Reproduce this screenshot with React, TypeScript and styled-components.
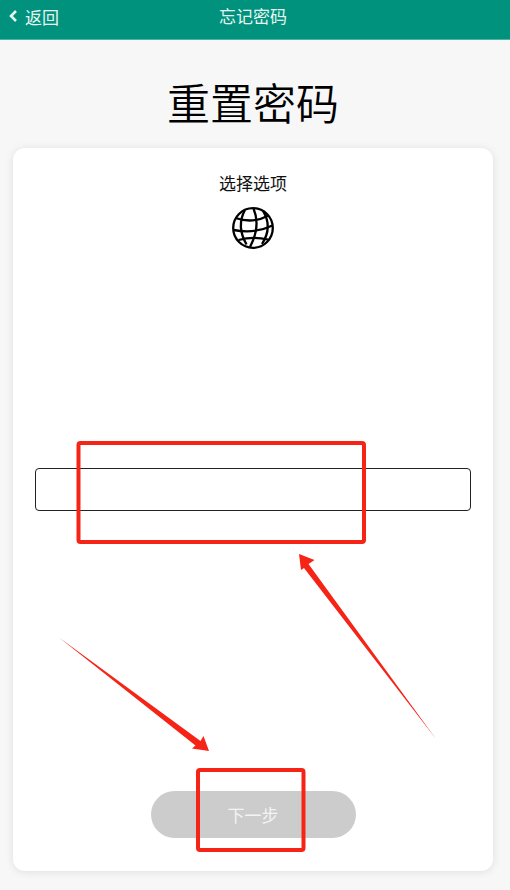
import React from 'react';
import styled, { createGlobalStyle } from 'styled-components';

const GlobalStyle = createGlobalStyle`
  html, body {
    margin: 0;
    padding: 0;
    background: #f7f7f7;
    font-family: "Noto Sans CJK SC", "Liberation Sans", sans-serif;
  }
`;

const Page = styled.div`
  position: relative;
  width: 510px;
  height: 890px;
  display: flex;
  flex-direction: column;
  overflow: hidden;
  background: #f7f7f7;
`;

const Header = styled.header`
  height: 40px;
  flex: none;
  box-sizing: border-box;
  position: relative;
  display: flex;
  align-items: center;
  justify-content: center;
  padding-right: 4px;
  background: #00927d;
  border-bottom: 1px solid #4fb3a4;
  color: #e6f5f2;
  font-size: 17px;
`;

const BackLink = styled.div`
  position: absolute;
  left: 8px;
  top: 0;
  height: 32px;
  display: flex;
  align-items: center;
  gap: 7px;
`;

const HeaderTitle = styled.div`
  margin-top: -9px;
`;

const Title = styled.h1`
  margin: 32px 4px 0 0;
  height: 76px;
  text-align: center;
  color: #000;
  font-size: 43px;
  font-weight: 350;
  line-height: 58px;
`;

const Card = styled.main`
  margin: 0 17px 19px 13px;
  flex: 1;
  display: flex;
  flex-direction: column;
  align-items: center;
  background: #fff;
  border-radius: 12px;
  box-shadow: 0 1px 8px rgba(0, 0, 0, 0.1);
`;

const Label = styled.div`
  margin-top: 23px;
  height: 24px;
  line-height: 24px;
  font-size: 17px;
  color: #111;
`;

const GlobeIcon = styled.svg`
  margin-top: 11px;
  margin-right: 1px;
  width: 44px;
  height: 44px;
`;

const Input = styled.div`
  margin-top: 218px;
  width: 436px;
  height: 43px;
  box-sizing: border-box;
  border: 1px solid #222;
  border-radius: 4px;
  background: #fff;
`;

const NextButton = styled.button`
  margin-top: auto;
  margin-bottom: 33px;
  width: 205px;
  height: 47px;
  border: 0;
  border-radius: 24px;
  background: #cccccc;
  color: #f4f4f4;
  font-family: inherit;
  font-size: 17px;
`;

const Annotations = styled.svg`
  position: absolute;
  inset: 0;
  width: 510px;
  height: 890px;
  pointer-events: none;
`;

export default function App() {
  return (
    <Page>
      <GlobalStyle />
      <Header>
        <BackLink>
          <svg width="10" height="14" viewBox="0 0 10 14">
            <path d="M8 2 3 7l5 5" fill="none" stroke="#e6f5f2" strokeWidth="2.6" />
          </svg>
          返回
        </BackLink>
        <HeaderTitle>忘记密码</HeaderTitle>
      </Header>
      <Title>重置密码</Title>
      <Card>
        <Label>选择选项</Label>
        <GlobeIcon viewBox="0 0 44 44" fill="none" stroke="#000" strokeWidth="2.3">
          <circle cx="22" cy="22" r="19.8" />
          <path d="M14 4Q5 20 15.500 38.500" />
          <path d="M22.500 2.500Q30 20 19 41" />
          <path d="M32 5Q42 21 31 38" />
          <path d="M4.500 12Q22 18 37.500 9.500" />
          <path d="M2.500 24Q24 28 41.500 19.500" />
          <path d="M7.500 34Q22 30 37 33.500" />
        </GlobeIcon>
        <Input />
        <NextButton>下一步</NextButton>
      </Card>
      <Annotations viewBox="0 0 510 890">
        <rect x="78.500" y="443" width="285.500" height="99" rx="2" fill="none" stroke="#f52416" strokeWidth="4" />
        <rect x="198" y="770" width="105.500" height="80" rx="2" fill="none" stroke="#f52416" strokeWidth="4" />
        <path d="M299 554 314.500 560 308.500 564 436 739 304 568 301 570Z" fill="#f52416" />
        <path d="M209 751 192 748.500 195.500 745.500 59 637.500 200.500 741 203.500 736Z" fill="#f52416" />
      </Annotations>
    </Page>
  );
}
